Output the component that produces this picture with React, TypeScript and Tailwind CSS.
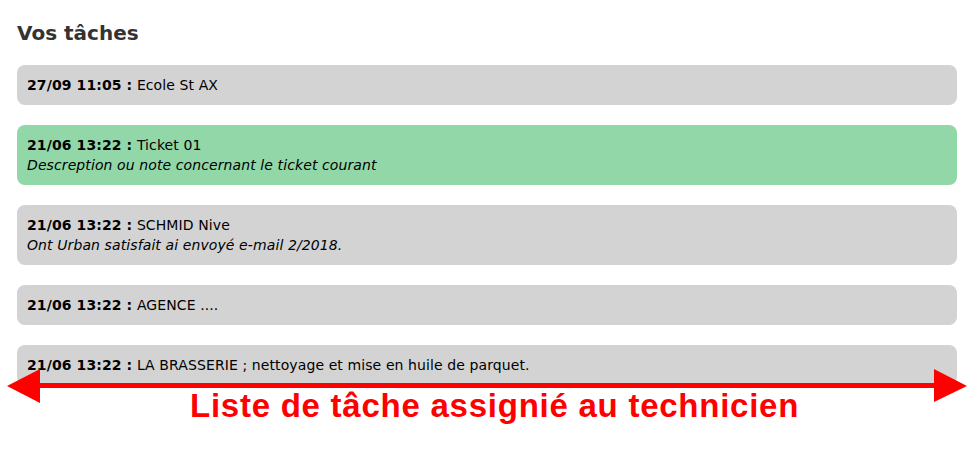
const tasks = [
  { date: "27/09 11:05", title: "Ecole St AX", note: "", active: false },
  { date: "21/06 13:22", title: "Ticket 01", note: "Descreption ou note concernant le ticket courant", active: true },
  { date: "21/06 13:22", title: "SCHMID Nive", note: "Ont Urban satisfait ai envoyé e-mail 2/2018.", active: false },
  { date: "21/06 13:22", title: "AGENCE ....", note: "", active: false },
  { date: "21/06 13:22", title: "LA BRASSERIE ; nettoyage et mise en huile de parquet.", note: "", active: false },
];

export default function App() {
  return (
    <div className="relative h-[468px] w-[978px] overflow-hidden bg-white font-['DejaVu_Sans',sans-serif]">
      <div className="px-[17px] pt-[21px]">
        <h2 className="text-[20px] font-bold leading-[24px] text-[#333]">Vos tâches</h2>
        <ul className="mt-[20px] flex w-[940px] flex-col gap-[20px]">
          {tasks.map((t, i) => (
            <li
              key={i}
              className={`rounded-[8px] px-[10px] py-[10px] text-[14px] leading-[20px] tracking-[0.1px] text-black ${
                t.active ? "bg-[#91d7a7]" : "bg-[#d3d3d3]"
              }`}
            >
              <div>
                <b>{t.date} :</b> {t.title}
              </div>
              {t.note ? <div className="italic">{t.note}</div> : null}
            </li>
          ))}
        </ul>
      </div>

      {/* annotation overlay */}
      <svg className="absolute left-0 top-0" width="978" height="468" viewBox="0 0 978 468">
        <rect x="38" y="383" width="898" height="5" fill="#ff0000" />
        <polygon points="7,386 40,369 40,403" fill="#ff0000" />
        <polygon points="967,386 934,369 934,402" fill="#ff0000" />
      </svg>
      <div className="absolute left-[190px] top-[387px] font-['Liberation_Sans',sans-serif] text-[33px] font-bold leading-[38px] tracking-[0.75px] text-[#ff0000]">
        Liste de tâche assignié au technicien
      </div>
    </div>
  );
}
